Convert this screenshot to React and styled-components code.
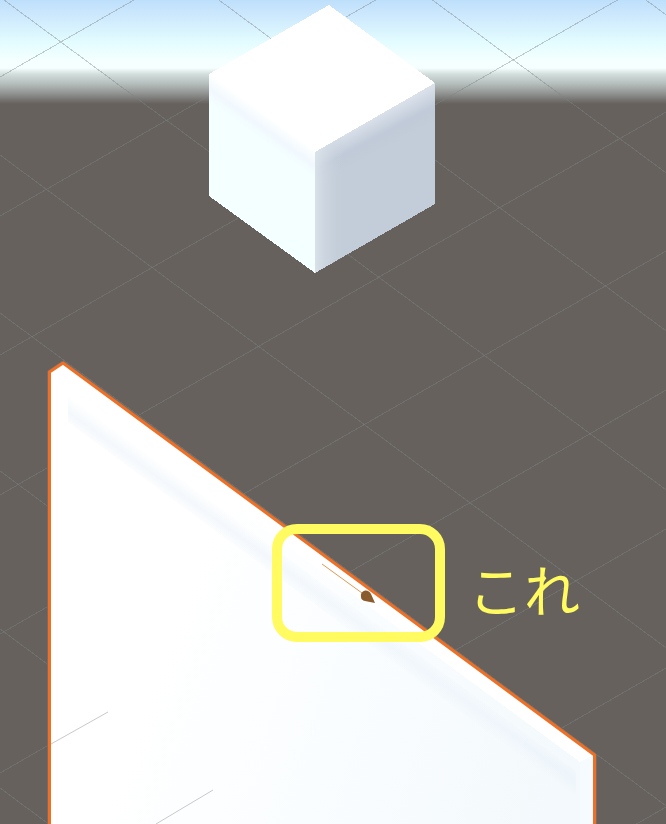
import React from "react";
import styled, { createGlobalStyle } from "styled-components";

const Global = createGlobalStyle`
  html, body { margin: 0; padding: 0; background: #66615c; }
  #root { width: 666px; height: 824px; overflow: hidden; }
`;

const Stage = styled.div`
  position: relative;
  width: 666px;
  height: 824px;
  overflow: hidden;
  background: linear-gradient(
    to bottom,
    #bedffb 0,
    #cfeafd 18px,
    #e3fcff 42px,
    #f4ffff 60px,
    #f6ffff 68px,
    #d3dfdd 74px,
    #b4bdbb 84px,
    #8f918f 94px,
    #757370 100px,
    #66615c 104px,
    #66615c 100%
  );
`;

const Scene = styled.svg`
  display: block;
  width: 666px;
  height: 824px;
`;

const GridLine = styled.line`
  stroke: rgba(125, 130, 135, 0.42);
  stroke-width: 1;
  shape-rendering: crispEdges;
`;

const PlaneLine = styled.line`
  stroke: #c9c9c9;
  stroke-width: 1;
`;

const Face = styled.polygon`
  shape-rendering: crispEdges;
`;

const Outline = styled.polygon`
  fill: none;
  stroke: ${(p) => p.$color};
  stroke-width: ${(p) => p.$width}px;
  stroke-linejoin: round;
`;

const Highlight = styled.div`
  position: absolute;
  left: 272px;
  top: 524px;
  width: 153px;
  height: 98px;
  border: 10px solid #fffb60;
  border-radius: 25px;
`;

const Note = styled.div`
  position: absolute;
  left: 468px;
  top: 550px;
  font-family: "Noto Sans CJK JP", "Noto Sans", sans-serif;
  font-size: 56px;
  line-height: 76px;
  font-weight: 400;
  color: #fffb60;
  white-space: nowrap;
`;

const SLOPE_A = 0.74;
const SLOPE_B = -0.575;
const rowsA = [-478, -320, -162, -3, 155, 313, 471, 629, 788];
const rowsB = [77, 216, 355, 495, 634, 773, 912, 1051, 1190, 1329, 1468];

const planeEdge = "49.5,372 63,363 594.5,755 594.5,826 49.5,826";

export default function App() {
  return (
    <Stage>
      <Global />
      <Scene viewBox="0 0 666 824">
        <defs>
          <linearGradient id="leftFace" gradientUnits="userSpaceOnUse" x1="262" y1="113" x2="249" y2="131">
            <stop offset="0" stopColor="#fdffff" />
            <stop offset="0.5" stopColor="#f1f8fe" />
            <stop offset="1" stopColor="#f4ffff" />
          </linearGradient>
          <linearGradient id="rightFace" gradientUnits="userSpaceOnUse" x1="375" y1="118" x2="390" y2="146">
            <stop offset="0" stopColor="#d9e0ea" />
            <stop offset="0.55" stopColor="#c0cad8" />
            <stop offset="1" stopColor="#c3cdd9" />
          </linearGradient>
          <linearGradient id="rightSheen" gradientUnits="userSpaceOnUse" x1="315" y1="200" x2="345" y2="200">
            <stop offset="0" stopColor="#dbe3ea" stopOpacity="0.9" />
            <stop offset="1" stopColor="#c3cdd9" stopOpacity="0" />
          </linearGradient>
          <linearGradient id="planeFace" gradientUnits="userSpaceOnUse" x1="150" y1="650" x2="560" y2="800">
            <stop offset="0" stopColor="#ffffff" />
            <stop offset="0.45" stopColor="#fafdff" />
            <stop offset="1" stopColor="#f3f9fc" />
          </linearGradient>
          <linearGradient id="planeBand" gradientUnits="userSpaceOnUse" x1="343" y1="595" x2="327" y2="617">
            <stop offset="0" stopColor="#e9f1f9" stopOpacity="0" />
            <stop offset="0.5" stopColor="#e9f1f9" stopOpacity="0.5" />
            <stop offset="1" stopColor="#e9f1f9" stopOpacity="0" />
          </linearGradient>
        </defs>

        {rowsA.map((c) => (
          <GridLine key={c} x1={0} y1={c} x2={666} y2={c + SLOPE_A * 666} />
        ))}
        {rowsB.map((d) => (
          <GridLine key={d} x1={0} y1={d} x2={666} y2={d + SLOPE_B * 666} />
        ))}

        <Face points="329,5 209,74 315,152 435,83" fill="#ffffff" />
        <Face points="209,74 315,152 315,273 209,196" fill="url(#leftFace)" />
        <Face points="315,152 435,83 435,204 315,273" fill="url(#rightFace)" />
        <Face points="315,152 345,135 345,256 315,273" fill="url(#rightSheen)" />

        <Outline points={planeEdge} $color="#7c7068" $width={4.5} />
        <Face points={planeEdge} fill="#ffffff" />
        <Face points="62,380 580,762 580,826 50,826 50,372" fill="url(#planeFace)" />
        <Face points="580,762 594,755 594,826 580,826" fill="#f5fbfe" />
        <Face points="68,396 576,771 576,797 68,422" fill="url(#planeBand)" />
        <Outline points={planeEdge} $color="#ee7026" $width={3} />

        <PlaneLine x1={51} y1={744} x2={108} y2={712} />
        <PlaneLine x1={156} y1={824} x2={213} y2={790} />

        <line x1={322} y1={564} x2={362} y2={593} stroke="#dc9c52" strokeWidth={1} />
        <path d="M361 597 Q360 592 365 590.5 Q369 590 371 594 L375 603 L365 601 Q361 600 361 597 Z" fill="#8a5b2c" />
      </Scene>
      <Highlight />
      <Note>これ</Note>
    </Stage>
  );
}
